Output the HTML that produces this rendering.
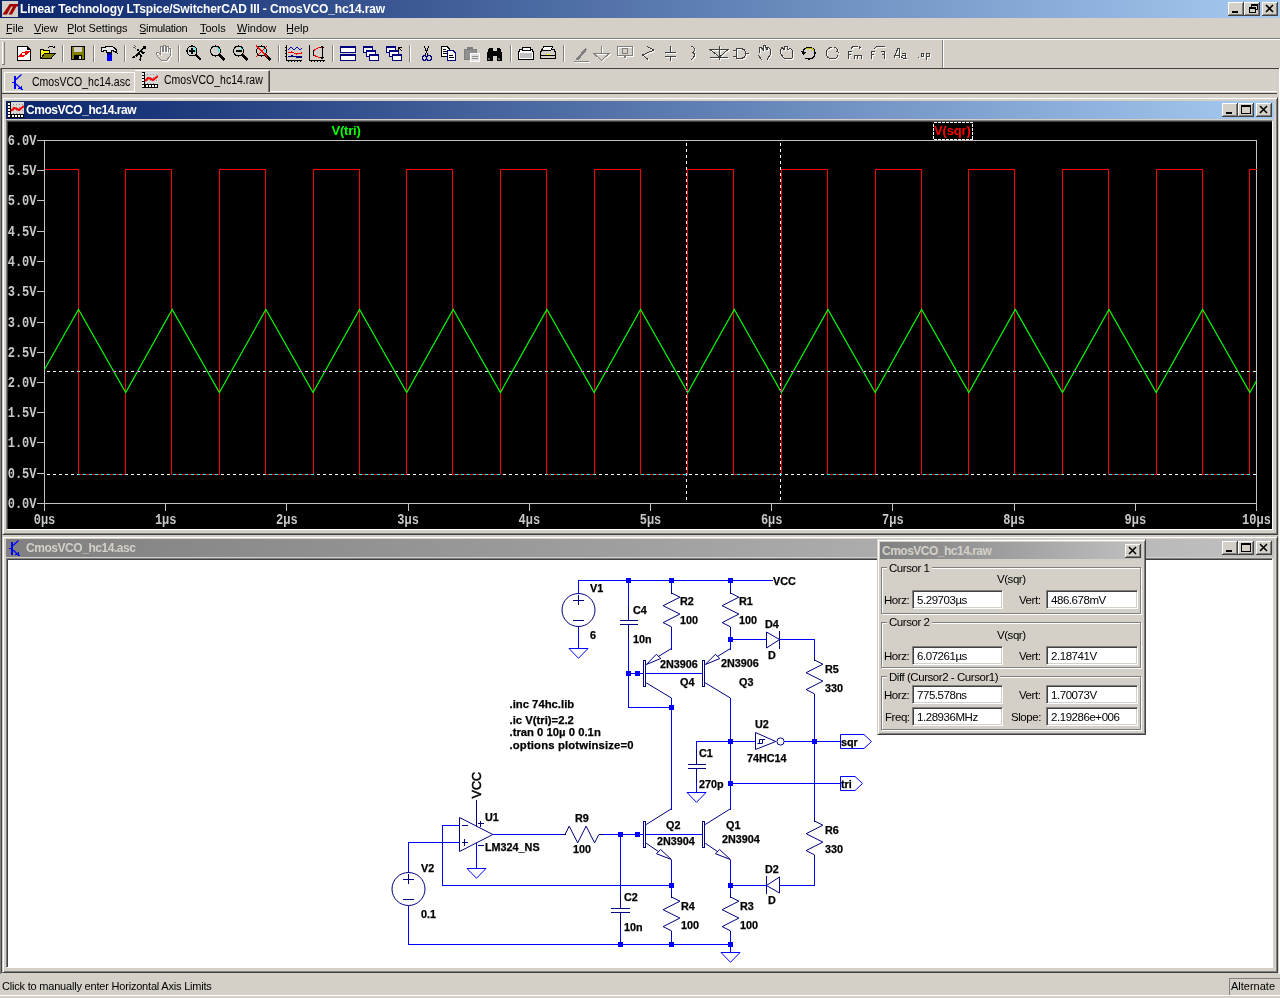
<!DOCTYPE html>
<html><head><meta charset="utf-8">
<style>
html,body{margin:0;padding:0;}
body{width:1280px;height:998px;overflow:hidden;position:relative;background:#D4D0C8;font-family:"Liberation Sans",sans-serif;font-size:11px;color:#000;}
.a{position:absolute;}
.tb{background:linear-gradient(to right,#0A246A,#A6CAF0);}
.tbi{background:linear-gradient(to right,#808080,#C0C0C0);}
.ttl{color:#fff;font-weight:bold;font-size:12px;white-space:nowrap;}
.btn{position:absolute;width:16px;height:14px;background:#D4D0C8;box-shadow:inset -1px -1px #404040,inset 1px 1px #fff,inset -2px -2px #808080;}
.menu span{position:absolute;top:4px;white-space:nowrap;}
.menu u{text-decoration:none;}
.hl{position:absolute;height:1px;}
.vl{position:absolute;width:1px;}
.sunk{box-sizing:border-box;border-top:1px solid #808080;border-left:1px solid #808080;border-bottom:1px solid #fff;border-right:1px solid #fff;}
.edit{position:absolute;height:19px;background:#fff;box-sizing:border-box;border-top:1px solid #808080;border-left:1px solid #808080;border-bottom:1px solid #fff;border-right:1px solid #fff;box-shadow:inset 1px 1px #404040,inset -1px -1px #D4D0C8;padding:3px 0 0 4px;font-size:11.5px;letter-spacing:-0.45px;white-space:nowrap;}
.grp{position:absolute;box-sizing:border-box;border:1px solid #808080;box-shadow:1px 1px #fff,inset 1px 1px #fff;}
.lbl{position:absolute;white-space:nowrap;font-size:11.5px;letter-spacing:-0.45px;}
.sch{font-family:"Liberation Sans",sans-serif;font-weight:bold;font-size:11.5px;}
.sch text{stroke:#000;stroke-width:0.25px;}
</style></head>
<body>
<!-- main title bar -->
<div class="a tb" style="left:0;top:0;width:1280px;height:18px;"></div>
<svg class="a" style="left:2px;top:1px" width="16" height="16" viewBox="0 0 16 16"><rect width="16" height="16" fill="#D4D0C8"/><path d="M0.5 13.5 H5 L10 4 H7 Z" fill="#A00000"/><path d="M7 3 H16 V5.5 H14.5 L10 13.5 H6.5 L11 5.5 H8 Z" fill="#A00000"/></svg>
<div class="a ttl" style="left:20px;top:2px;letter-spacing:-0.14px">Linear Technology LTspice/SwitcherCAD III - CmosVCO_hc14.raw</div>
<div class="btn" style="left:1228px;top:2px;"></div>
<div class="btn" style="left:1244px;top:2px;"></div>
<div class="btn" style="left:1262px;top:2px;"></div>
<svg class="a" style="left:1228px;top:2px" width="52" height="14" shape-rendering="crispEdges"><rect x="4" y="9" width="6" height="2" fill="#000"/><rect x="23.5" y="2.5" width="6" height="5" fill="none" stroke="#000"/><rect x="23" y="2" width="7" height="2" fill="#000"/><rect x="21.5" y="5.5" width="6" height="5" fill="#D4D0C8" stroke="#000"/><rect x="21" y="5" width="7" height="2" fill="#000"/><path d="M38 3 L45 10 M45 3 L38 10" stroke="#000" stroke-width="1.6" shape-rendering="auto"/></svg>

<!-- menu -->
<div class="a menu" style="left:0;top:18px;width:1280px;height:20px;">
<span style="left:6px">File</span><span style="left:34px">View</span><span style="left:67px;letter-spacing:-0.1px">Plot Settings</span><span style="left:139px;letter-spacing:-0.3px">Simulation</span><span style="left:200px">Tools</span><span style="left:237px">Window</span><span style="left:286px">Help</span>
</div>
<div class="hl" style="left:6px;top:33px;width:6px;background:#000"></div><div class="hl" style="left:34px;top:33px;width:7px;background:#000"></div><div class="hl" style="left:68px;top:33px;width:6px;background:#000"></div><div class="hl" style="left:140px;top:33px;width:6px;background:#000"></div><div class="hl" style="left:200px;top:33px;width:6px;background:#000"></div><div class="hl" style="left:237px;top:33px;width:9px;background:#000"></div><div class="hl" style="left:287px;top:33px;width:6px;background:#000"></div>
<div class="hl" style="left:0;top:38px;width:1280px;background:#808080"></div>
<div class="hl" style="left:0;top:39px;width:1280px;background:#fff"></div>

<svg class="a" style="left:0;top:0" width="960" height="70" viewBox="0 0 960 70" shape-rendering="crispEdges">
<!-- gripper -->
<rect x="2" y="42" width="1" height="23" fill="#fff"/><rect x="4" y="42" width="1" height="23" fill="#808080"/><rect x="2" y="64" width="3" height="1" fill="#808080"/>
<!-- separators -->
<g fill="#808080"><rect x="62" y="45" width="1" height="17"/><rect x="93" y="45" width="1" height="17"/><rect x="124" y="45" width="1" height="17"/><rect x="178" y="45" width="1" height="17"/><rect x="278" y="45" width="1" height="17"/><rect x="332" y="45" width="1" height="17"/><rect x="409" y="45" width="1" height="17"/><rect x="510" y="45" width="1" height="17"/><rect x="563" y="45" width="1" height="17"/><rect x="942" y="40" width="1" height="28"/></g>
<g fill="#fff"><rect x="63" y="45" width="1" height="17"/><rect x="94" y="45" width="1" height="17"/><rect x="125" y="45" width="1" height="17"/><rect x="179" y="45" width="1" height="17"/><rect x="279" y="45" width="1" height="17"/><rect x="333" y="45" width="1" height="17"/><rect x="410" y="45" width="1" height="17"/><rect x="511" y="45" width="1" height="17"/><rect x="564" y="45" width="1" height="17"/><rect x="943" y="40" width="1" height="28"/></g>
<!-- new -->
<path d="M17.5 46.5 H27 L30.5 50 V60.5 H17.5 Z" fill="#fff" stroke="#000"/><path d="M27 46.5 V49.5 H30.5" fill="none" stroke="#000"/>
<path d="M18 57 L22 52.5 L25 51.5 L30 51 L26 55 L24 56.5 L22 56.5 L21 57 Z" fill="#f00"/><ellipse cx="23.3" cy="54" rx="1.6" ry="1.3" fill="#fff"/>
<!-- open -->
<path d="M40.5 58.5 V49.5 H43 L44 50.5 H49.5 V53" fill="#ffff00" stroke="#000"/>
<path d="M41 58.5 L44.5 53.5 H55 L51 58.5 Z" fill="#808000" stroke="#000" stroke-linejoin="miter"/>
<path d="M48.5 47.5 Q51 45.5 53.5 47.5" fill="none" stroke="#000"/><path d="M52 48 H55 V46Z" fill="#000"/>
<!-- save -->
<rect x="71.5" y="46.5" width="13" height="13" fill="#808000" stroke="#000"/><rect x="74" y="47" width="8" height="5" fill="#D4D0C8"/><rect x="74" y="55" width="8" height="4" fill="#000"/><rect x="79" y="56" width="2" height="3" fill="#D4D0C8"/>
<!-- hammer -->
<path d="M101.5 48 Q103 47 104 48 Q106 46 110 46.2 Q115 46.5 116.5 50.5 L117 53 Q114 50 111.5 51 V52.5 H106.5 V51 Q104 50.5 102 51.5 Z" fill="#E8E8E8" stroke="#000" stroke-width="1.1"/>
<rect x="107" y="53" width="5" height="8" fill="#0000FF"/><rect x="107" y="53" width="5" height="2" fill="#000080"/>
<!-- runner -->
<g stroke="#000" fill="none" stroke-width="1.5"><path d="M143 48.5 L139 53 L135.5 56.5 L132 57.5"/><path d="M139 53 L141 56 L140 60.5"/><path d="M141 50 L142.5 53 L145 52.5"/><path d="M139 51 L137.5 49.5"/></g>
<circle cx="144.5" cy="47.5" r="1.6" fill="#000"/>
<path d="M133 47 L135.5 48.5 M134 45.5 L136 47" stroke="#404040" stroke-width="0.8"/>
<!-- hand grey -->
<path d="M159 58 L157 54 L159 53 L161 55 V48 L163 47 L164 53 V46 L166 46 L167 53 V47 L169 47 L169 53 V49 L171 49 V57 L168 61 H162Z" fill="none" stroke="#fff"/>
<path d="M158 57 L156 53 L158 52 L160 54 V47 L162 46 L163 52 V45 L165 45 L166 52 V46 L168 46 L168 52 V48 L170 48 V56 L167 60 H161Z" fill="none" stroke="#808080"/>
<!-- zoom icons -->
<g stroke="#000" fill="none" stroke-width="1.2">
<circle cx="192" cy="51" r="5"/><circle cx="215.5" cy="51" r="5"/><circle cx="238.5" cy="51" r="5"/><circle cx="261.5" cy="51" r="5"/>
</g>
<g stroke="#000" stroke-width="2.4"><path d="M196 55 L201 60"/><path d="M219.5 55 L224.5 60"/><path d="M242.5 55 L247.5 60"/><path d="M265.5 55 L270.5 60"/></g>
<g stroke="#0ff" stroke-width="1" fill="none"><path d="M194 47.5 Q196 49 195.5 52"/><path d="M217.5 47.5 Q219.5 49 219 52"/><path d="M240.5 47.5 Q242.5 49 242 52"/><path d="M263.5 47.5 Q265.5 49 265 52"/></g>
<path d="M189 51 H195 M192 48 V54" stroke="#000" stroke-width="1.3"/><path d="M235.5 51 H241.5" stroke="#000" stroke-width="1.3"/>
<path d="M256 45 L268 58 M267 46 L256 57" stroke="#f00" stroke-width="1.3"/>
<!-- autorange -->
<path d="M286.5 45 V60.5 H302" stroke="#000" fill="none"/><g fill="#000"><rect x="288" y="61" width="1" height="1"/><rect x="291" y="61" width="1" height="1"/><rect x="294" y="61" width="1" height="1"/><rect x="297" y="61" width="1" height="1"/><rect x="300" y="61" width="1" height="1"/><rect x="285" y="47" width="1" height="1"/><rect x="285" y="50" width="1" height="1"/><rect x="285" y="53" width="1" height="1"/><rect x="285" y="56" width="1" height="1"/></g>
<path d="M288 50 L291 47 L294 50 L297 47 L300 50 L302 48" stroke="#0000c0" fill="none"/><path d="M288 53 L292 52 L296 54 L302 53" stroke="#f00" fill="none" stroke-width="1.2"/><path d="M288 57 L292 56 L296 57 L302 57" stroke="#000080" fill="none" stroke-width="1.2"/>
<path d="M309.5 45 V60.5 H325" stroke="#000" fill="none"/><g fill="#000"><rect x="311" y="61" width="1" height="1"/><rect x="314" y="61" width="1" height="1"/><rect x="317" y="61" width="1" height="1"/><rect x="320" y="61" width="1" height="1"/><rect x="323" y="61" width="1" height="1"/></g>
<path d="M322 47 Q314 48 313 53 Q314 57 322 58" stroke="#f00" fill="none"/><path d="M322 46 V59 M320.5 48 L322 46 L323.5 48 M320.5 57 L322 59 L323.5 57 M313 50 V56" stroke="#000" fill="none"/>
<!-- tile -->
<rect x="340.5" y="46.5" width="15" height="6" fill="#fff" stroke="#000080"/><rect x="340" y="46" width="16" height="2" fill="#000080"/>
<rect x="340.5" y="54.5" width="15" height="6" fill="#fff" stroke="#000080"/><rect x="340" y="54" width="16" height="2" fill="#000080"/>
<!-- cascade -->
<g fill="#fff" stroke="#000080"><rect x="363.5" y="46.5" width="9" height="6"/><rect x="366.5" y="50.5" width="9" height="6"/><rect x="369.5" y="54.5" width="9" height="6"/></g>
<g fill="#000080"><rect x="363" y="46" width="10" height="2"/><rect x="366" y="50" width="10" height="2"/><rect x="369" y="54" width="10" height="2"/></g>
<!-- arrange -->
<g fill="#fff" stroke="#000080"><rect x="386.5" y="46.5" width="9" height="6"/><rect x="389.5" y="50.5" width="9" height="6"/><rect x="392.5" y="54.5" width="9" height="6"/></g>
<g fill="#000080"><rect x="386" y="46" width="10" height="2"/><rect x="389" y="50" width="10" height="2"/><rect x="392" y="54" width="10" height="2"/></g>
<path d="M402.5 51.5 L398.5 47.5 M398.5 47.5 V50.5 M398.5 47.5 H401.5" stroke="#000" fill="none"/>
<!-- cut -->
<path d="M424 46 L428 55 M429 46 L425 55" stroke="#000" fill="none"/><circle cx="424.5" cy="58" r="2.3" fill="none" stroke="#000080" stroke-width="1.2"/><circle cx="429" cy="58" r="2.3" fill="none" stroke="#000080" stroke-width="1.2"/>
<!-- copy -->
<path d="M441.5 46.5 H447 L449 48.5 V56.5 H441.5Z" fill="#fff" stroke="#000"/><path d="M447.5 50.5 H453 L455.5 53 V60.5 H447.5Z" fill="#fff" stroke="#000080"/><path d="M443 49 H446 M443 51 H447 M443 53 H447 M449 55 H453 M449 57 H454" stroke="#000"/>
<!-- paste grey -->
<path d="M464.5 49.5 H476.5 V59.5 H464.5 Z" fill="#909090" stroke="#808080"/><rect x="467" y="47" width="6" height="3" fill="#808080"/>
<path d="M470.5 53.5 H479.5 V61.5 H470.5 Z" fill="#E0E0E0" stroke="#fff"/><path d="M472 56.5 H478 M472 58.5 H478" stroke="#909090"/>
<!-- find -->
<path d="M487 60.5 V53 L489 48 H492.5 V51 H496.5 V48 H500 L502 53 V60.5 H496.5 V56 H492.5 V60.5 Z" fill="#000"/>
<rect x="488" y="58" width="2" height="2" fill="#606060"/><rect x="498" y="58" width="2" height="2" fill="#606060"/>
<!-- print preview -->
<path d="M518.5 52.5 V59.5 H533.5 V52.5 L532 49.5 H520Z" fill="#fff" stroke="#000"/><rect x="522" y="47" width="8" height="3" fill="#fff" stroke="#000"/><rect x="520" y="53" width="12" height="5" fill="#c0c0c0"/>
<!-- print -->
<path d="M540.5 52.5 V58.5 H555.5 V52.5 L554 49.5 H542Z" fill="#D4D0C8" stroke="#000"/><path d="M543.5 46.5 H552.5 L551 50 H542Z" fill="#fff" stroke="#000"/><rect x="541" y="55" width="14" height="1" fill="#000"/><rect x="547" y="54" width="3" height="1" fill="#ff0"/>
<!-- grey schematic tools -->
<g stroke="#fff" fill="none" transform="translate(1 1)">
<path d="M574 61.5 H589 M576 60 L586 48"/>
<path d="M601 46 V53 M594 53.5 H609 L601.5 60.5 Z"/>
<path d="M617.5 46.5 H632.5 V55.5 H626 L625 58 L624 55.5 H617.5Z"/>
<path d="M647 46.5 L654 50 L642.5 55 L648 59.5"/>
<path d="M670.5 46 V51.5 M665 52.5 H676 M665 56 H676 M670.5 57 V61"/>
<path d="M691 46 Q697 48 693 52.5 Q697 55 691 60"/>
<path d="M719.5 46 V60 M710 49.5 H728 L719.5 57 Z M710 57.5 H728"/>
<path d="M736.5 48.5 H740 Q745.5 48.5 745.5 53.5 Q745.5 58.5 740 58.5 H736.5 Z M733 50.5 H736 M733 56.5 H736 M745.5 53.5 H749"/>
<path d="M758 55 L762 60 M760 53 L759 48 L761 47 L764 51 L763 46 L765 45 L767 50 L768 47 L770 49 L770 55 L767 60"/>
<path d="M780 51 L782 47 L784 50 L785 46 L787 46 L788 50 L790 48 L793 51 L792 58 H784 L780 53Z"/>
<path d="M832 47.5 Q826 48 826 53 Q827 59 832 59 Q837 59 838 55 M834 47 Q838 48 838 52 L836 51"/>
<path d="M848 51.5 H852 M848 52 V59 M848 54 H851 M854 55 V59 M854 55.5 H861 V59 M857.5 56 V59 M851 49 L853 46 H858 M859 47 L861 48 M860 46 L859 49"/>
<path d="M871 51.5 H875 M871 52 V59 M871 54 H874 M881 51.5 H885 M884.5 52 V59 M882 54 H885 M874 49 L877 46 H885"/>
<path d="M894 58 L898 48 H899.5 V58 M895 55 H899 M902 54 Q903 53 905 53 V58 H903 Q901 58 902 56 Q903 55 906 55 M906 58 H907"/>
<path d="M917.5 57.5 H918.5 M921 53 H923 V56 H921 Z M926 53 H929 V56 H926 M926 53 V60"/>
</g>
<g stroke="#808080" fill="none">
<path d="M574 61.5 H589 M576 60 L586 48" stroke-width="1.3"/><path d="M577 60 L586 49" stroke-width="2.5"/>
<path d="M601 46 V53 M594 53.5 H609 L601.5 60.5 Z"/>
<path d="M617.5 46.5 H632.5 V55.5 H626 L625 58 L624 55.5 H617.5Z M622.5 48.5 H627.5 V53.5 H622.5Z"/>
<path d="M647 46.5 L654 50 L642.5 55 L648 59.5" stroke="#404040"/>
<path d="M670.5 46 V51.5 M665 52.5 H676 M665 56 H676 M670.5 57 V61" stroke="#404040"/>
<path d="M691 46 Q697 48 693 52.5 Q697 55 691 60" stroke="#404040"/>
<path d="M719.5 46 V60 M710 49.5 H728 L719.5 57 Z M710 57.5 H728" stroke="#404040"/>
<path d="M736.5 48.5 H740 Q745.5 48.5 745.5 53.5 Q745.5 58.5 740 58.5 H736.5 Z M733 50.5 H736 M733 56.5 H736 M745.5 53.5 H749" stroke="#404040" stroke-width="1.2"/>
<path d="M758 55 L762 60 M760 53 L759 48 L761 47 L764 51 L763 46 L765 45 L767 50 L768 47 L770 49 L770 55 L767 60" stroke="#404040"/>
<path d="M780 51 L782 47 L784 50 L785 46 L787 46 L788 50 L790 48 L793 51 L792 58 H784 L780 53Z" stroke="#404040"/>
<path d="M832 47.5 Q826 48 826 53 Q827 59 832 59 Q837 59 838 55 M834 47 Q838 48 838 52 L836 51" stroke="#404040"/>
<path d="M848 51.5 H852 M848 52 V59 M848 54 H851 M854 55 V59 M854 55.5 H861 V59 M857.5 56 V59 M851 49 L853 46 H858 M859 47 L861 48 M860 46 L859 49" stroke="#404040"/>
<path d="M871 51.5 H875 M871 52 V59 M871 54 H874 M881 51.5 H885 M884.5 52 V59 M882 54 H885 M874 49 L877 46 H885" stroke="#404040"/>
<path d="M894 58 L898 48 H899.5 V58 M895 55 H899 M902 54 Q903 53 905 53 V58 H903 Q901 58 902 56 Q903 55 906 55 M906 58 H907" stroke="#404040"/>
<path d="M917.5 57.5 H918.5 M921 53 H923 V56 H921 Z M926 53 H929 V56 H926 M926 53 V60" stroke="#404040"/>
</g>
<path d="M803 53 Q803 47.5 809 47.5 Q815 47.5 815 53 Q815 59 809 59 Q806 59 805 58" stroke="#000" fill="none" stroke-width="1.3"/><path d="M806 48.5 Q812 47 814 51" stroke="#C0C000" fill="none" stroke-width="1.2"/><path d="M801 51 L803 55 L806 52.5 Z" fill="#000"/>
</svg>


<!-- toolbar bottom -->
<div class="hl" style="left:0;top:68px;width:1279px;background:#404040"></div>
<div class="vl" style="left:1279px;top:68px;height:906px;background:#fff"></div>

<!-- tabs -->
<div class="a" style="left:4px;top:72px;width:131px;height:20px;box-sizing:border-box;border:1px solid #fff;"></div>
<div class="a" style="left:135px;top:70px;width:135px;height:22px;box-sizing:border-box;border-top:1px solid #fff;border-right:1px solid #404040;box-shadow:inset -1px 0 #808080;"></div>
<div class="hl" style="left:270px;top:91px;width:1007px;background:#fff"></div>
<svg class="a" style="left:11px;top:74px" width="16" height="16" shape-rendering="crispEdges"><path d="M1 8.5 H3" stroke="#00f"/><rect x="3" y="2" width="2" height="13" fill="#00f"/><path d="M5 5.5 L10.5 0.5 M5 10 L11.5 16" stroke="#00f" stroke-width="1.2" shape-rendering="auto"/><path d="M7.5 14.5 L12 16.5 L10.5 12Z" fill="#00f"/></svg>
<svg class="a" style="left:142px;top:72px" width="16" height="16" shape-rendering="crispEdges"><rect x="3" y="0" width="13" height="12" fill="#D8D8D8"/><g fill="#909090"><rect x="5" y="2" width="1" height="1"/><rect x="8" y="2" width="1" height="1"/><rect x="11" y="2" width="1" height="1"/><rect x="14" y="2" width="1" height="1"/><rect x="5" y="5" width="1" height="1"/><rect x="8" y="5" width="1" height="1"/><rect x="11" y="5" width="1" height="1"/><rect x="14" y="5" width="1" height="1"/><rect x="5" y="8" width="1" height="1"/><rect x="8" y="8" width="1" height="1"/><rect x="11" y="8" width="1" height="1"/><rect x="14" y="8" width="1" height="1"/><rect x="5" y="11" width="1" height="1"/><rect x="8" y="11" width="1" height="1"/><rect x="11" y="11" width="1" height="1"/></g><rect x="0" y="0" width="3" height="16" fill="#000"/><rect x="0" y="12" width="16" height="4" fill="#000"/><g fill="#fff"><rect x="0" y="1" width="2" height="2"/><rect x="0" y="4" width="2" height="2"/><rect x="0" y="7" width="2" height="2"/><rect x="0" y="10" width="2" height="2"/><rect x="0" y="13" width="2" height="2"/><rect x="4" y="13" width="2" height="2"/><rect x="7" y="13" width="2" height="2"/><rect x="10" y="13" width="2" height="2"/><rect x="13" y="13" width="2" height="2"/></g><path d="M3 9 L6 6 L9 7 L11 8 L16 4" stroke="#f00" stroke-width="2" fill="none" shape-rendering="auto"/></svg>
<div class="a" style="left:32px;top:75px;font-size:12px;white-space:nowrap;transform:scaleX(0.876);transform-origin:0 0">CmosVCO_hc14.asc</div>
<div class="a" style="left:164px;top:73px;font-size:12px;white-space:nowrap;transform:scaleX(0.876);transform-origin:0 0">CmosVCO_hc14.raw</div>

<!-- MDI client edge -->
<div class="hl" style="left:2px;top:93px;width:1275px;background:#404040"></div>
<div class="vl" style="left:0;top:68px;height:906px;background:#808080"></div>
<div class="vl" style="left:1px;top:69px;height:904px;background:#404040"></div>

<!-- ============ PLOT WINDOW ============ -->
<div class="a" style="left:2px;top:97px;width:1276px;height:438px;box-sizing:border-box;background:#D4D0C8;border-top:1px solid #D4D0C8;border-left:1px solid #D4D0C8;border-right:1px solid #404040;border-bottom:1px solid #404040;box-shadow:inset 1px 1px #fff,inset -1px -1px #808080;"></div>
<div class="a tb" style="left:6px;top:101px;width:1268px;height:18px;"></div>
<svg class="a" style="left:8px;top:102px" width="16" height="16" shape-rendering="crispEdges"><rect x="3" y="0" width="13" height="12" fill="#D8D8D8"/><g fill="#909090"><rect x="5" y="2" width="1" height="1"/><rect x="8" y="2" width="1" height="1"/><rect x="11" y="2" width="1" height="1"/><rect x="14" y="2" width="1" height="1"/><rect x="5" y="5" width="1" height="1"/><rect x="8" y="5" width="1" height="1"/><rect x="11" y="5" width="1" height="1"/><rect x="14" y="5" width="1" height="1"/><rect x="5" y="8" width="1" height="1"/><rect x="8" y="8" width="1" height="1"/><rect x="11" y="8" width="1" height="1"/><rect x="14" y="8" width="1" height="1"/><rect x="5" y="11" width="1" height="1"/><rect x="8" y="11" width="1" height="1"/><rect x="11" y="11" width="1" height="1"/></g><rect x="0" y="0" width="3" height="16" fill="#000"/><rect x="0" y="12" width="16" height="4" fill="#000"/><g fill="#fff"><rect x="0" y="1" width="2" height="2"/><rect x="0" y="4" width="2" height="2"/><rect x="0" y="7" width="2" height="2"/><rect x="0" y="10" width="2" height="2"/><rect x="0" y="13" width="2" height="2"/><rect x="4" y="13" width="2" height="2"/><rect x="7" y="13" width="2" height="2"/><rect x="10" y="13" width="2" height="2"/><rect x="13" y="13" width="2" height="2"/></g><path d="M3 9 L6 6 L9 7 L11 8 L16 4" stroke="#f00" stroke-width="2" fill="none" shape-rendering="auto"/></svg>
<div class="a ttl" style="left:26px;top:103px;letter-spacing:-0.45px">CmosVCO_hc14.raw</div>
<div class="btn" style="left:1222px;top:103px;"></div>
<div class="btn" style="left:1238px;top:103px;"></div>
<div class="btn" style="left:1256px;top:103px;"></div>
<svg class="a" style="left:1222px;top:103px" width="50" height="14" shape-rendering="crispEdges"><rect x="4" y="9" width="6" height="2" fill="#000"/><rect x="19.5" y="2.5" width="9" height="8" fill="none" stroke="#000"/><rect x="19" y="2" width="10" height="2" fill="#000"/><path d="M38 3 L45 10 M45 3 L38 10" stroke="#000" stroke-width="1.6" shape-rendering="auto"/></svg>
<div class="a" style="left:6px;top:120px;width:1267px;height:410px;box-sizing:border-box;border-top:1px solid #808080;border-left:1px solid #808080;border-right:1px solid #fff;border-bottom:1px solid #fff;box-shadow:inset 1px 1px #404040;background:#000;"></div>
<svg class="a" style="left:0;top:0" width="1280" height="540" viewBox="0 0 1280 540" shape-rendering="crispEdges">
<g fill="#C4C4C4">
<rect x="37" y="140" width="1220" height="1"/>
<rect x="37" y="503" width="1220" height="1"/>
<rect x="44" y="140" width="1" height="371"/>
<rect x="1256" y="140" width="1" height="371"/>
<rect x="37" y="140" width="7" height="1"/>
<rect x="37" y="170" width="7" height="1"/>
<rect x="37" y="200" width="7" height="1"/>
<rect x="37" y="231" width="7" height="1"/>
<rect x="37" y="261" width="7" height="1"/>
<rect x="37" y="291" width="7" height="1"/>
<rect x="37" y="322" width="7" height="1"/>
<rect x="37" y="352" width="7" height="1"/>
<rect x="37" y="382" width="7" height="1"/>
<rect x="37" y="412" width="7" height="1"/>
<rect x="37" y="442" width="7" height="1"/>
<rect x="37" y="473" width="7" height="1"/>
<rect x="37" y="503" width="7" height="1"/>
<rect x="44" y="503" width="1" height="8"/>
<rect x="165" y="503" width="1" height="8"/>
<rect x="286" y="503" width="1" height="8"/>
<rect x="408" y="503" width="1" height="8"/>
<rect x="529" y="503" width="1" height="8"/>
<rect x="650" y="503" width="1" height="8"/>
<rect x="771" y="503" width="1" height="8"/>
<rect x="892" y="503" width="1" height="8"/>
<rect x="1014" y="503" width="1" height="8"/>
<rect x="1135" y="503" width="1" height="8"/>
<rect x="1256" y="503" width="1" height="8"/>
</g>
<g fill="#C8C8C8" font-family="Liberation Mono" font-size="12" font-weight="bold" shape-rendering="auto">
<text transform="translate(36.5 507.9) scale(1 1.19)" text-anchor="end">0.0V</text>
<text transform="translate(36.5 477.9) scale(1 1.19)" text-anchor="end">0.5V</text>
<text transform="translate(36.5 446.9) scale(1 1.19)" text-anchor="end">1.0V</text>
<text transform="translate(36.5 416.9) scale(1 1.19)" text-anchor="end">1.5V</text>
<text transform="translate(36.5 386.9) scale(1 1.19)" text-anchor="end">2.0V</text>
<text transform="translate(36.5 356.9) scale(1 1.19)" text-anchor="end">2.5V</text>
<text transform="translate(36.5 326.9) scale(1 1.19)" text-anchor="end">3.0V</text>
<text transform="translate(36.5 295.9) scale(1 1.19)" text-anchor="end">3.5V</text>
<text transform="translate(36.5 265.9) scale(1 1.19)" text-anchor="end">4.0V</text>
<text transform="translate(36.5 235.9) scale(1 1.19)" text-anchor="end">4.5V</text>
<text transform="translate(36.5 204.9) scale(1 1.19)" text-anchor="end">5.0V</text>
<text transform="translate(36.5 174.9) scale(1 1.19)" text-anchor="end">5.5V</text>
<text transform="translate(36.5 144.9) scale(1 1.19)" text-anchor="end">6.0V</text>
<text transform="translate(44.5 523.5) scale(1 1.19)" text-anchor="middle">0µs</text>
<text transform="translate(165.7 523.5) scale(1 1.19)" text-anchor="middle">1µs</text>
<text transform="translate(286.9 523.5) scale(1 1.19)" text-anchor="middle">2µs</text>
<text transform="translate(408.1 523.5) scale(1 1.19)" text-anchor="middle">3µs</text>
<text transform="translate(529.3 523.5) scale(1 1.19)" text-anchor="middle">4µs</text>
<text transform="translate(650.5 523.5) scale(1 1.19)" text-anchor="middle">5µs</text>
<text transform="translate(771.7 523.5) scale(1 1.19)" text-anchor="middle">6µs</text>
<text transform="translate(892.9 523.5) scale(1 1.19)" text-anchor="middle">7µs</text>
<text transform="translate(1014.1 523.5) scale(1 1.19)" text-anchor="middle">8µs</text>
<text transform="translate(1135.3 523.5) scale(1 1.19)" text-anchor="middle">9µs</text>
<text transform="translate(1256.5 523.5) scale(1 1.19)" text-anchor="middle">10µs</text>
</g>
<path d="M44.5 169.5 L78.5 169.5 L78.5 474.5 L125.5 474.5 L125.5 169.5 L171.5 169.5 L171.5 474.5 L219.5 474.5 L219.5 169.5 L265.5 169.5 L265.5 474.5 L313.5 474.5 L313.5 169.5 L359.5 169.5 L359.5 474.5 L406.5 474.5 L406.5 169.5 L452.5 169.5 L452.5 474.5 L500.5 474.5 L500.5 169.5 L546.5 169.5 L546.5 474.5 L594.5 474.5 L594.5 169.5 L640.5 169.5 L640.5 474.5 L687.5 474.5 L687.5 169.5 L733.5 169.5 L733.5 474.5 L781.5 474.5 L781.5 169.5 L827.5 169.5 L827.5 474.5 L875.5 474.5 L875.5 169.5 L921.5 169.5 L921.5 474.5 L968.5 474.5 L968.5 169.5 L1014.5 169.5 L1014.5 474.5 L1062.5 474.5 L1062.5 169.5 L1108.5 169.5 L1108.5 474.5 L1156.5 474.5 L1156.5 169.5 L1202.5 169.5 L1202.5 474.5 L1249.5 474.5 L1249.5 169.5 L1256.5 169.5" stroke="#FF0000" stroke-width="1" fill="none"/>
<path d="M44.50 369.50 L78.50 309.50 L125.70 392.50 L172.18 309.50 L219.38 392.50 L265.86 309.50 L313.06 392.50 L359.54 309.50 L406.74 392.50 L453.22 309.50 L500.42 392.50 L546.90 309.50 L594.10 392.50 L640.58 309.50 L687.78 392.50 L734.26 309.50 L781.46 392.50 L827.94 309.50 L875.14 392.50 L921.62 309.50 L968.82 392.50 L1015.30 309.50 L1062.50 392.50 L1108.98 309.50 L1156.18 392.50 L1202.66 309.50 L1249.86 392.50 L1256.50 380.73" stroke="#00FF00" stroke-width="1.15" fill="none" shape-rendering="auto"/>
<text x="331.5" y="134.5" fill="#00FF00" font-family="Liberation Sans" font-weight="bold" font-size="13" letter-spacing="-0.2" shape-rendering="auto">V(tri)</text>
<text x="934" y="134.5" fill="#FF0000" font-family="Liberation Sans" font-weight="bold" font-size="13" letter-spacing="-0.15" shape-rendering="auto">V(sqr)</text>
<rect x="933.5" y="122.5" width="39" height="17" fill="none" stroke="#fff" stroke-dasharray="3 1"/>
</svg>
<svg class="a" style="left:0;top:0;mix-blend-mode:difference" width="1280" height="540" viewBox="0 0 1280 540" shape-rendering="crispEdges">
<g fill="#FFFFFF">
<rect x="686" y="143" width="1" height="3"/>
<rect x="686" y="149" width="1" height="3"/>
<rect x="686" y="155" width="1" height="3"/>
<rect x="686" y="161" width="1" height="3"/>
<rect x="686" y="167" width="1" height="3"/>
<rect x="686" y="173" width="1" height="3"/>
<rect x="686" y="179" width="1" height="3"/>
<rect x="686" y="185" width="1" height="3"/>
<rect x="686" y="191" width="1" height="3"/>
<rect x="686" y="197" width="1" height="3"/>
<rect x="686" y="203" width="1" height="3"/>
<rect x="686" y="209" width="1" height="3"/>
<rect x="686" y="215" width="1" height="3"/>
<rect x="686" y="221" width="1" height="3"/>
<rect x="686" y="227" width="1" height="3"/>
<rect x="686" y="233" width="1" height="3"/>
<rect x="686" y="239" width="1" height="3"/>
<rect x="686" y="245" width="1" height="3"/>
<rect x="686" y="251" width="1" height="3"/>
<rect x="686" y="257" width="1" height="3"/>
<rect x="686" y="263" width="1" height="3"/>
<rect x="686" y="269" width="1" height="3"/>
<rect x="686" y="275" width="1" height="3"/>
<rect x="686" y="281" width="1" height="3"/>
<rect x="686" y="287" width="1" height="3"/>
<rect x="686" y="293" width="1" height="3"/>
<rect x="686" y="299" width="1" height="3"/>
<rect x="686" y="305" width="1" height="3"/>
<rect x="686" y="311" width="1" height="3"/>
<rect x="686" y="317" width="1" height="3"/>
<rect x="686" y="323" width="1" height="3"/>
<rect x="686" y="329" width="1" height="3"/>
<rect x="686" y="335" width="1" height="3"/>
<rect x="686" y="341" width="1" height="3"/>
<rect x="686" y="347" width="1" height="3"/>
<rect x="686" y="353" width="1" height="3"/>
<rect x="686" y="359" width="1" height="3"/>
<rect x="686" y="365" width="1" height="3"/>
<rect x="686" y="371" width="1" height="3"/>
<rect x="686" y="377" width="1" height="3"/>
<rect x="686" y="383" width="1" height="3"/>
<rect x="686" y="389" width="1" height="3"/>
<rect x="686" y="395" width="1" height="3"/>
<rect x="686" y="401" width="1" height="3"/>
<rect x="686" y="407" width="1" height="3"/>
<rect x="686" y="413" width="1" height="3"/>
<rect x="686" y="419" width="1" height="3"/>
<rect x="686" y="425" width="1" height="3"/>
<rect x="686" y="431" width="1" height="3"/>
<rect x="686" y="437" width="1" height="3"/>
<rect x="686" y="443" width="1" height="3"/>
<rect x="686" y="449" width="1" height="3"/>
<rect x="686" y="455" width="1" height="3"/>
<rect x="686" y="461" width="1" height="3"/>
<rect x="686" y="467" width="1" height="3"/>
<rect x="686" y="473" width="1" height="3"/>
<rect x="686" y="479" width="1" height="3"/>
<rect x="686" y="485" width="1" height="3"/>
<rect x="686" y="491" width="1" height="3"/>
<rect x="686" y="497" width="1" height="3"/>
<rect x="780" y="143" width="1" height="3"/>
<rect x="780" y="149" width="1" height="3"/>
<rect x="780" y="155" width="1" height="3"/>
<rect x="780" y="161" width="1" height="3"/>
<rect x="780" y="167" width="1" height="3"/>
<rect x="780" y="173" width="1" height="3"/>
<rect x="780" y="179" width="1" height="3"/>
<rect x="780" y="185" width="1" height="3"/>
<rect x="780" y="191" width="1" height="3"/>
<rect x="780" y="197" width="1" height="3"/>
<rect x="780" y="203" width="1" height="3"/>
<rect x="780" y="209" width="1" height="3"/>
<rect x="780" y="215" width="1" height="3"/>
<rect x="780" y="221" width="1" height="3"/>
<rect x="780" y="227" width="1" height="3"/>
<rect x="780" y="233" width="1" height="3"/>
<rect x="780" y="239" width="1" height="3"/>
<rect x="780" y="245" width="1" height="3"/>
<rect x="780" y="251" width="1" height="3"/>
<rect x="780" y="257" width="1" height="3"/>
<rect x="780" y="263" width="1" height="3"/>
<rect x="780" y="269" width="1" height="3"/>
<rect x="780" y="275" width="1" height="3"/>
<rect x="780" y="281" width="1" height="3"/>
<rect x="780" y="287" width="1" height="3"/>
<rect x="780" y="293" width="1" height="3"/>
<rect x="780" y="299" width="1" height="3"/>
<rect x="780" y="305" width="1" height="3"/>
<rect x="780" y="311" width="1" height="3"/>
<rect x="780" y="317" width="1" height="3"/>
<rect x="780" y="323" width="1" height="3"/>
<rect x="780" y="329" width="1" height="3"/>
<rect x="780" y="335" width="1" height="3"/>
<rect x="780" y="341" width="1" height="3"/>
<rect x="780" y="347" width="1" height="3"/>
<rect x="780" y="353" width="1" height="3"/>
<rect x="780" y="359" width="1" height="3"/>
<rect x="780" y="365" width="1" height="3"/>
<rect x="780" y="371" width="1" height="3"/>
<rect x="780" y="377" width="1" height="3"/>
<rect x="780" y="383" width="1" height="3"/>
<rect x="780" y="389" width="1" height="3"/>
<rect x="780" y="395" width="1" height="3"/>
<rect x="780" y="401" width="1" height="3"/>
<rect x="780" y="407" width="1" height="3"/>
<rect x="780" y="413" width="1" height="3"/>
<rect x="780" y="419" width="1" height="3"/>
<rect x="780" y="425" width="1" height="3"/>
<rect x="780" y="431" width="1" height="3"/>
<rect x="780" y="437" width="1" height="3"/>
<rect x="780" y="443" width="1" height="3"/>
<rect x="780" y="449" width="1" height="3"/>
<rect x="780" y="455" width="1" height="3"/>
<rect x="780" y="461" width="1" height="3"/>
<rect x="780" y="467" width="1" height="3"/>
<rect x="780" y="473" width="1" height="3"/>
<rect x="780" y="479" width="1" height="3"/>
<rect x="780" y="485" width="1" height="3"/>
<rect x="780" y="491" width="1" height="3"/>
<rect x="780" y="497" width="1" height="3"/>
<rect x="47" y="474" width="3" height="1"/>
<rect x="53" y="474" width="3" height="1"/>
<rect x="59" y="474" width="3" height="1"/>
<rect x="65" y="474" width="3" height="1"/>
<rect x="71" y="474" width="3" height="1"/>
<rect x="77" y="474" width="3" height="1"/>
<rect x="83" y="474" width="3" height="1"/>
<rect x="89" y="474" width="3" height="1"/>
<rect x="95" y="474" width="3" height="1"/>
<rect x="101" y="474" width="3" height="1"/>
<rect x="107" y="474" width="3" height="1"/>
<rect x="113" y="474" width="3" height="1"/>
<rect x="119" y="474" width="3" height="1"/>
<rect x="125" y="474" width="3" height="1"/>
<rect x="131" y="474" width="3" height="1"/>
<rect x="137" y="474" width="3" height="1"/>
<rect x="143" y="474" width="3" height="1"/>
<rect x="149" y="474" width="3" height="1"/>
<rect x="155" y="474" width="3" height="1"/>
<rect x="161" y="474" width="3" height="1"/>
<rect x="167" y="474" width="3" height="1"/>
<rect x="173" y="474" width="3" height="1"/>
<rect x="179" y="474" width="3" height="1"/>
<rect x="185" y="474" width="3" height="1"/>
<rect x="191" y="474" width="3" height="1"/>
<rect x="197" y="474" width="3" height="1"/>
<rect x="203" y="474" width="3" height="1"/>
<rect x="209" y="474" width="3" height="1"/>
<rect x="215" y="474" width="3" height="1"/>
<rect x="221" y="474" width="3" height="1"/>
<rect x="227" y="474" width="3" height="1"/>
<rect x="233" y="474" width="3" height="1"/>
<rect x="239" y="474" width="3" height="1"/>
<rect x="245" y="474" width="3" height="1"/>
<rect x="251" y="474" width="3" height="1"/>
<rect x="257" y="474" width="3" height="1"/>
<rect x="263" y="474" width="3" height="1"/>
<rect x="269" y="474" width="3" height="1"/>
<rect x="275" y="474" width="3" height="1"/>
<rect x="281" y="474" width="3" height="1"/>
<rect x="287" y="474" width="3" height="1"/>
<rect x="293" y="474" width="3" height="1"/>
<rect x="299" y="474" width="3" height="1"/>
<rect x="305" y="474" width="3" height="1"/>
<rect x="311" y="474" width="3" height="1"/>
<rect x="317" y="474" width="3" height="1"/>
<rect x="323" y="474" width="3" height="1"/>
<rect x="329" y="474" width="3" height="1"/>
<rect x="335" y="474" width="3" height="1"/>
<rect x="341" y="474" width="3" height="1"/>
<rect x="347" y="474" width="3" height="1"/>
<rect x="353" y="474" width="3" height="1"/>
<rect x="359" y="474" width="3" height="1"/>
<rect x="365" y="474" width="3" height="1"/>
<rect x="371" y="474" width="3" height="1"/>
<rect x="377" y="474" width="3" height="1"/>
<rect x="383" y="474" width="3" height="1"/>
<rect x="389" y="474" width="3" height="1"/>
<rect x="395" y="474" width="3" height="1"/>
<rect x="401" y="474" width="3" height="1"/>
<rect x="407" y="474" width="3" height="1"/>
<rect x="413" y="474" width="3" height="1"/>
<rect x="419" y="474" width="3" height="1"/>
<rect x="425" y="474" width="3" height="1"/>
<rect x="431" y="474" width="3" height="1"/>
<rect x="437" y="474" width="3" height="1"/>
<rect x="443" y="474" width="3" height="1"/>
<rect x="449" y="474" width="3" height="1"/>
<rect x="455" y="474" width="3" height="1"/>
<rect x="461" y="474" width="3" height="1"/>
<rect x="467" y="474" width="3" height="1"/>
<rect x="473" y="474" width="3" height="1"/>
<rect x="479" y="474" width="3" height="1"/>
<rect x="485" y="474" width="3" height="1"/>
<rect x="491" y="474" width="3" height="1"/>
<rect x="497" y="474" width="3" height="1"/>
<rect x="503" y="474" width="3" height="1"/>
<rect x="509" y="474" width="3" height="1"/>
<rect x="515" y="474" width="3" height="1"/>
<rect x="521" y="474" width="3" height="1"/>
<rect x="527" y="474" width="3" height="1"/>
<rect x="533" y="474" width="3" height="1"/>
<rect x="539" y="474" width="3" height="1"/>
<rect x="545" y="474" width="3" height="1"/>
<rect x="551" y="474" width="3" height="1"/>
<rect x="557" y="474" width="3" height="1"/>
<rect x="563" y="474" width="3" height="1"/>
<rect x="569" y="474" width="3" height="1"/>
<rect x="575" y="474" width="3" height="1"/>
<rect x="581" y="474" width="3" height="1"/>
<rect x="587" y="474" width="3" height="1"/>
<rect x="593" y="474" width="3" height="1"/>
<rect x="599" y="474" width="3" height="1"/>
<rect x="605" y="474" width="3" height="1"/>
<rect x="611" y="474" width="3" height="1"/>
<rect x="617" y="474" width="3" height="1"/>
<rect x="623" y="474" width="3" height="1"/>
<rect x="629" y="474" width="3" height="1"/>
<rect x="635" y="474" width="3" height="1"/>
<rect x="641" y="474" width="3" height="1"/>
<rect x="647" y="474" width="3" height="1"/>
<rect x="653" y="474" width="3" height="1"/>
<rect x="659" y="474" width="3" height="1"/>
<rect x="665" y="474" width="3" height="1"/>
<rect x="671" y="474" width="3" height="1"/>
<rect x="677" y="474" width="3" height="1"/>
<rect x="683" y="474" width="3" height="1"/>
<rect x="689" y="474" width="3" height="1"/>
<rect x="695" y="474" width="3" height="1"/>
<rect x="701" y="474" width="3" height="1"/>
<rect x="707" y="474" width="3" height="1"/>
<rect x="713" y="474" width="3" height="1"/>
<rect x="719" y="474" width="3" height="1"/>
<rect x="725" y="474" width="3" height="1"/>
<rect x="731" y="474" width="3" height="1"/>
<rect x="737" y="474" width="3" height="1"/>
<rect x="743" y="474" width="3" height="1"/>
<rect x="749" y="474" width="3" height="1"/>
<rect x="755" y="474" width="3" height="1"/>
<rect x="761" y="474" width="3" height="1"/>
<rect x="767" y="474" width="3" height="1"/>
<rect x="773" y="474" width="3" height="1"/>
<rect x="779" y="474" width="3" height="1"/>
<rect x="785" y="474" width="3" height="1"/>
<rect x="791" y="474" width="3" height="1"/>
<rect x="797" y="474" width="3" height="1"/>
<rect x="803" y="474" width="3" height="1"/>
<rect x="809" y="474" width="3" height="1"/>
<rect x="815" y="474" width="3" height="1"/>
<rect x="821" y="474" width="3" height="1"/>
<rect x="827" y="474" width="3" height="1"/>
<rect x="833" y="474" width="3" height="1"/>
<rect x="839" y="474" width="3" height="1"/>
<rect x="845" y="474" width="3" height="1"/>
<rect x="851" y="474" width="3" height="1"/>
<rect x="857" y="474" width="3" height="1"/>
<rect x="863" y="474" width="3" height="1"/>
<rect x="869" y="474" width="3" height="1"/>
<rect x="875" y="474" width="3" height="1"/>
<rect x="881" y="474" width="3" height="1"/>
<rect x="887" y="474" width="3" height="1"/>
<rect x="893" y="474" width="3" height="1"/>
<rect x="899" y="474" width="3" height="1"/>
<rect x="905" y="474" width="3" height="1"/>
<rect x="911" y="474" width="3" height="1"/>
<rect x="917" y="474" width="3" height="1"/>
<rect x="923" y="474" width="3" height="1"/>
<rect x="929" y="474" width="3" height="1"/>
<rect x="935" y="474" width="3" height="1"/>
<rect x="941" y="474" width="3" height="1"/>
<rect x="947" y="474" width="3" height="1"/>
<rect x="953" y="474" width="3" height="1"/>
<rect x="959" y="474" width="3" height="1"/>
<rect x="965" y="474" width="3" height="1"/>
<rect x="971" y="474" width="3" height="1"/>
<rect x="977" y="474" width="3" height="1"/>
<rect x="983" y="474" width="3" height="1"/>
<rect x="989" y="474" width="3" height="1"/>
<rect x="995" y="474" width="3" height="1"/>
<rect x="1001" y="474" width="3" height="1"/>
<rect x="1007" y="474" width="3" height="1"/>
<rect x="1013" y="474" width="3" height="1"/>
<rect x="1019" y="474" width="3" height="1"/>
<rect x="1025" y="474" width="3" height="1"/>
<rect x="1031" y="474" width="3" height="1"/>
<rect x="1037" y="474" width="3" height="1"/>
<rect x="1043" y="474" width="3" height="1"/>
<rect x="1049" y="474" width="3" height="1"/>
<rect x="1055" y="474" width="3" height="1"/>
<rect x="1061" y="474" width="3" height="1"/>
<rect x="1067" y="474" width="3" height="1"/>
<rect x="1073" y="474" width="3" height="1"/>
<rect x="1079" y="474" width="3" height="1"/>
<rect x="1085" y="474" width="3" height="1"/>
<rect x="1091" y="474" width="3" height="1"/>
<rect x="1097" y="474" width="3" height="1"/>
<rect x="1103" y="474" width="3" height="1"/>
<rect x="1109" y="474" width="3" height="1"/>
<rect x="1115" y="474" width="3" height="1"/>
<rect x="1121" y="474" width="3" height="1"/>
<rect x="1127" y="474" width="3" height="1"/>
<rect x="1133" y="474" width="3" height="1"/>
<rect x="1139" y="474" width="3" height="1"/>
<rect x="1145" y="474" width="3" height="1"/>
<rect x="1151" y="474" width="3" height="1"/>
<rect x="1157" y="474" width="3" height="1"/>
<rect x="1163" y="474" width="3" height="1"/>
<rect x="1169" y="474" width="3" height="1"/>
<rect x="1175" y="474" width="3" height="1"/>
<rect x="1181" y="474" width="3" height="1"/>
<rect x="1187" y="474" width="3" height="1"/>
<rect x="1193" y="474" width="3" height="1"/>
<rect x="1199" y="474" width="3" height="1"/>
<rect x="1205" y="474" width="3" height="1"/>
<rect x="1211" y="474" width="3" height="1"/>
<rect x="1217" y="474" width="3" height="1"/>
<rect x="1223" y="474" width="3" height="1"/>
<rect x="1229" y="474" width="3" height="1"/>
<rect x="1235" y="474" width="3" height="1"/>
<rect x="1241" y="474" width="3" height="1"/>
<rect x="1247" y="474" width="3" height="1"/>
<rect x="1253" y="474" width="3" height="1"/>
<rect x="47" y="371" width="3" height="1"/>
<rect x="53" y="371" width="3" height="1"/>
<rect x="59" y="371" width="3" height="1"/>
<rect x="65" y="371" width="3" height="1"/>
<rect x="71" y="371" width="3" height="1"/>
<rect x="77" y="371" width="3" height="1"/>
<rect x="83" y="371" width="3" height="1"/>
<rect x="89" y="371" width="3" height="1"/>
<rect x="95" y="371" width="3" height="1"/>
<rect x="101" y="371" width="3" height="1"/>
<rect x="107" y="371" width="3" height="1"/>
<rect x="113" y="371" width="3" height="1"/>
<rect x="119" y="371" width="3" height="1"/>
<rect x="125" y="371" width="3" height="1"/>
<rect x="131" y="371" width="3" height="1"/>
<rect x="137" y="371" width="3" height="1"/>
<rect x="143" y="371" width="3" height="1"/>
<rect x="149" y="371" width="3" height="1"/>
<rect x="155" y="371" width="3" height="1"/>
<rect x="161" y="371" width="3" height="1"/>
<rect x="167" y="371" width="3" height="1"/>
<rect x="173" y="371" width="3" height="1"/>
<rect x="179" y="371" width="3" height="1"/>
<rect x="185" y="371" width="3" height="1"/>
<rect x="191" y="371" width="3" height="1"/>
<rect x="197" y="371" width="3" height="1"/>
<rect x="203" y="371" width="3" height="1"/>
<rect x="209" y="371" width="3" height="1"/>
<rect x="215" y="371" width="3" height="1"/>
<rect x="221" y="371" width="3" height="1"/>
<rect x="227" y="371" width="3" height="1"/>
<rect x="233" y="371" width="3" height="1"/>
<rect x="239" y="371" width="3" height="1"/>
<rect x="245" y="371" width="3" height="1"/>
<rect x="251" y="371" width="3" height="1"/>
<rect x="257" y="371" width="3" height="1"/>
<rect x="263" y="371" width="3" height="1"/>
<rect x="269" y="371" width="3" height="1"/>
<rect x="275" y="371" width="3" height="1"/>
<rect x="281" y="371" width="3" height="1"/>
<rect x="287" y="371" width="3" height="1"/>
<rect x="293" y="371" width="3" height="1"/>
<rect x="299" y="371" width="3" height="1"/>
<rect x="305" y="371" width="3" height="1"/>
<rect x="311" y="371" width="3" height="1"/>
<rect x="317" y="371" width="3" height="1"/>
<rect x="323" y="371" width="3" height="1"/>
<rect x="329" y="371" width="3" height="1"/>
<rect x="335" y="371" width="3" height="1"/>
<rect x="341" y="371" width="3" height="1"/>
<rect x="347" y="371" width="3" height="1"/>
<rect x="353" y="371" width="3" height="1"/>
<rect x="359" y="371" width="3" height="1"/>
<rect x="365" y="371" width="3" height="1"/>
<rect x="371" y="371" width="3" height="1"/>
<rect x="377" y="371" width="3" height="1"/>
<rect x="383" y="371" width="3" height="1"/>
<rect x="389" y="371" width="3" height="1"/>
<rect x="395" y="371" width="3" height="1"/>
<rect x="401" y="371" width="3" height="1"/>
<rect x="407" y="371" width="3" height="1"/>
<rect x="413" y="371" width="3" height="1"/>
<rect x="419" y="371" width="3" height="1"/>
<rect x="425" y="371" width="3" height="1"/>
<rect x="431" y="371" width="3" height="1"/>
<rect x="437" y="371" width="3" height="1"/>
<rect x="443" y="371" width="3" height="1"/>
<rect x="449" y="371" width="3" height="1"/>
<rect x="455" y="371" width="3" height="1"/>
<rect x="461" y="371" width="3" height="1"/>
<rect x="467" y="371" width="3" height="1"/>
<rect x="473" y="371" width="3" height="1"/>
<rect x="479" y="371" width="3" height="1"/>
<rect x="485" y="371" width="3" height="1"/>
<rect x="491" y="371" width="3" height="1"/>
<rect x="497" y="371" width="3" height="1"/>
<rect x="503" y="371" width="3" height="1"/>
<rect x="509" y="371" width="3" height="1"/>
<rect x="515" y="371" width="3" height="1"/>
<rect x="521" y="371" width="3" height="1"/>
<rect x="527" y="371" width="3" height="1"/>
<rect x="533" y="371" width="3" height="1"/>
<rect x="539" y="371" width="3" height="1"/>
<rect x="545" y="371" width="3" height="1"/>
<rect x="551" y="371" width="3" height="1"/>
<rect x="557" y="371" width="3" height="1"/>
<rect x="563" y="371" width="3" height="1"/>
<rect x="569" y="371" width="3" height="1"/>
<rect x="575" y="371" width="3" height="1"/>
<rect x="581" y="371" width="3" height="1"/>
<rect x="587" y="371" width="3" height="1"/>
<rect x="593" y="371" width="3" height="1"/>
<rect x="599" y="371" width="3" height="1"/>
<rect x="605" y="371" width="3" height="1"/>
<rect x="611" y="371" width="3" height="1"/>
<rect x="617" y="371" width="3" height="1"/>
<rect x="623" y="371" width="3" height="1"/>
<rect x="629" y="371" width="3" height="1"/>
<rect x="635" y="371" width="3" height="1"/>
<rect x="641" y="371" width="3" height="1"/>
<rect x="647" y="371" width="3" height="1"/>
<rect x="653" y="371" width="3" height="1"/>
<rect x="659" y="371" width="3" height="1"/>
<rect x="665" y="371" width="3" height="1"/>
<rect x="671" y="371" width="3" height="1"/>
<rect x="677" y="371" width="3" height="1"/>
<rect x="683" y="371" width="3" height="1"/>
<rect x="689" y="371" width="3" height="1"/>
<rect x="695" y="371" width="3" height="1"/>
<rect x="701" y="371" width="3" height="1"/>
<rect x="707" y="371" width="3" height="1"/>
<rect x="713" y="371" width="3" height="1"/>
<rect x="719" y="371" width="3" height="1"/>
<rect x="725" y="371" width="3" height="1"/>
<rect x="731" y="371" width="3" height="1"/>
<rect x="737" y="371" width="3" height="1"/>
<rect x="743" y="371" width="3" height="1"/>
<rect x="749" y="371" width="3" height="1"/>
<rect x="755" y="371" width="3" height="1"/>
<rect x="761" y="371" width="3" height="1"/>
<rect x="767" y="371" width="3" height="1"/>
<rect x="773" y="371" width="3" height="1"/>
<rect x="779" y="371" width="3" height="1"/>
<rect x="785" y="371" width="3" height="1"/>
<rect x="791" y="371" width="3" height="1"/>
<rect x="797" y="371" width="3" height="1"/>
<rect x="803" y="371" width="3" height="1"/>
<rect x="809" y="371" width="3" height="1"/>
<rect x="815" y="371" width="3" height="1"/>
<rect x="821" y="371" width="3" height="1"/>
<rect x="827" y="371" width="3" height="1"/>
<rect x="833" y="371" width="3" height="1"/>
<rect x="839" y="371" width="3" height="1"/>
<rect x="845" y="371" width="3" height="1"/>
<rect x="851" y="371" width="3" height="1"/>
<rect x="857" y="371" width="3" height="1"/>
<rect x="863" y="371" width="3" height="1"/>
<rect x="869" y="371" width="3" height="1"/>
<rect x="875" y="371" width="3" height="1"/>
<rect x="881" y="371" width="3" height="1"/>
<rect x="887" y="371" width="3" height="1"/>
<rect x="893" y="371" width="3" height="1"/>
<rect x="899" y="371" width="3" height="1"/>
<rect x="905" y="371" width="3" height="1"/>
<rect x="911" y="371" width="3" height="1"/>
<rect x="917" y="371" width="3" height="1"/>
<rect x="923" y="371" width="3" height="1"/>
<rect x="929" y="371" width="3" height="1"/>
<rect x="935" y="371" width="3" height="1"/>
<rect x="941" y="371" width="3" height="1"/>
<rect x="947" y="371" width="3" height="1"/>
<rect x="953" y="371" width="3" height="1"/>
<rect x="959" y="371" width="3" height="1"/>
<rect x="965" y="371" width="3" height="1"/>
<rect x="971" y="371" width="3" height="1"/>
<rect x="977" y="371" width="3" height="1"/>
<rect x="983" y="371" width="3" height="1"/>
<rect x="989" y="371" width="3" height="1"/>
<rect x="995" y="371" width="3" height="1"/>
<rect x="1001" y="371" width="3" height="1"/>
<rect x="1007" y="371" width="3" height="1"/>
<rect x="1013" y="371" width="3" height="1"/>
<rect x="1019" y="371" width="3" height="1"/>
<rect x="1025" y="371" width="3" height="1"/>
<rect x="1031" y="371" width="3" height="1"/>
<rect x="1037" y="371" width="3" height="1"/>
<rect x="1043" y="371" width="3" height="1"/>
<rect x="1049" y="371" width="3" height="1"/>
<rect x="1055" y="371" width="3" height="1"/>
<rect x="1061" y="371" width="3" height="1"/>
<rect x="1067" y="371" width="3" height="1"/>
<rect x="1073" y="371" width="3" height="1"/>
<rect x="1079" y="371" width="3" height="1"/>
<rect x="1085" y="371" width="3" height="1"/>
<rect x="1091" y="371" width="3" height="1"/>
<rect x="1097" y="371" width="3" height="1"/>
<rect x="1103" y="371" width="3" height="1"/>
<rect x="1109" y="371" width="3" height="1"/>
<rect x="1115" y="371" width="3" height="1"/>
<rect x="1121" y="371" width="3" height="1"/>
<rect x="1127" y="371" width="3" height="1"/>
<rect x="1133" y="371" width="3" height="1"/>
<rect x="1139" y="371" width="3" height="1"/>
<rect x="1145" y="371" width="3" height="1"/>
<rect x="1151" y="371" width="3" height="1"/>
<rect x="1157" y="371" width="3" height="1"/>
<rect x="1163" y="371" width="3" height="1"/>
<rect x="1169" y="371" width="3" height="1"/>
<rect x="1175" y="371" width="3" height="1"/>
<rect x="1181" y="371" width="3" height="1"/>
<rect x="1187" y="371" width="3" height="1"/>
<rect x="1193" y="371" width="3" height="1"/>
<rect x="1199" y="371" width="3" height="1"/>
<rect x="1205" y="371" width="3" height="1"/>
<rect x="1211" y="371" width="3" height="1"/>
<rect x="1217" y="371" width="3" height="1"/>
<rect x="1223" y="371" width="3" height="1"/>
<rect x="1229" y="371" width="3" height="1"/>
<rect x="1235" y="371" width="3" height="1"/>
<rect x="1241" y="371" width="3" height="1"/>
<rect x="1247" y="371" width="3" height="1"/>
<rect x="1253" y="371" width="3" height="1"/>
</g></svg>

<!-- ============ SCHEMATIC WINDOW ============ -->
<div class="a" style="left:2px;top:536px;width:1276px;height:437px;box-sizing:border-box;background:#D4D0C8;border-top:1px solid #D4D0C8;border-left:1px solid #D4D0C8;border-right:1px solid #404040;border-bottom:1px solid #404040;box-shadow:inset 1px 1px #fff,inset -1px -1px #808080;"></div>
<div class="a tbi" style="left:6px;top:539px;width:1268px;height:18px;"></div>
<svg class="a" style="left:8px;top:540px" width="16" height="16" shape-rendering="crispEdges"><path d="M1 8.5 H3" stroke="#00f"/><rect x="3" y="2" width="2" height="13" fill="#00f"/><path d="M5 5.5 L10.5 0.5 M5 10 L11.5 16" stroke="#00f" stroke-width="1.2" shape-rendering="auto"/><path d="M7.5 14.5 L12 16.5 L10.5 12Z" fill="#00f"/></svg>
<div class="a ttl" style="left:26px;top:541px;color:#D4D0C8;letter-spacing:-0.45px">CmosVCO_hc14.asc</div>
<div class="btn" style="left:1222px;top:541px;"></div>
<div class="btn" style="left:1238px;top:541px;"></div>
<div class="btn" style="left:1256px;top:541px;"></div>
<svg class="a" style="left:1222px;top:541px" width="50" height="14" shape-rendering="crispEdges"><rect x="4" y="9" width="6" height="2" fill="#000"/><rect x="19.5" y="2.5" width="9" height="8" fill="none" stroke="#000"/><rect x="19" y="2" width="10" height="2" fill="#000"/><path d="M38 3 L45 10 M45 3 L38 10" stroke="#000" stroke-width="1.6" shape-rendering="auto"/></svg>
<div class="a" style="left:6px;top:558px;width:1267px;height:410px;box-sizing:border-box;border-top:1px solid #808080;border-left:1px solid #808080;border-right:1px solid #fff;border-bottom:1px solid #fff;box-shadow:inset 1px 1px #404040;background:#fff;"></div>
<svg class="a sch" style="left:0;top:0" width="1280" height="998" viewBox="0 0 1280 998" shape-rendering="crispEdges">
<rect x="578" y="580" width="195" height="1" fill="#0000FF"/>
<rect x="578" y="580" width="1" height="14" fill="#0000FF"/>
<rect x="578" y="626" width="1" height="23" fill="#0000FF"/>
<path shape-rendering="auto" d="M569 648.5 H588 L578.5 658.3 Z" stroke="#0000FF" fill="none"/>
<circle shape-rendering="auto" cx="578.5" cy="610" r="16.5" stroke="#000080" fill="none"/>
<rect x="573" y="600" width="11" height="1" fill="#000080"/>
<rect x="578" y="595" width="1" height="10" fill="#000080"/>
<rect x="573" y="620" width="11" height="1" fill="#000080"/>
<rect x="628" y="580" width="1" height="27" fill="#0000FF"/>
<rect x="620" y="620" width="18" height="1" fill="#000080"/>
<rect x="620" y="624" width="18" height="1" fill="#000080"/>
<rect x="628" y="606" width="1" height="15" fill="#000080"/>
<rect x="628" y="624" width="1" height="15" fill="#000080"/>
<rect x="628" y="638" width="1" height="70" fill="#0000FF"/>
<rect x="628" y="673" width="16" height="1" fill="#0000FF"/>
<rect x="646" y="673" width="57" height="1" fill="#0000FF"/>
<rect x="628" y="707" width="44" height="1" fill="#0000FF"/>
<rect x="671" y="580" width="1" height="10" fill="#0000FF"/>
<path shape-rendering="auto" d="M671.5 593 L679.9 597.2 L663.1 605.7 L679.9 614.1 L663.1 622.6 L671.5 626.8" stroke="#000080" stroke-width="1" fill="none"/>
<rect x="671" y="589" width="1" height="5" fill="#000080"/>
<rect x="671" y="627" width="1" height="5" fill="#000080"/>
<rect x="671" y="631" width="1" height="19" fill="#0000FF"/>
<rect x="671" y="698" width="1" height="112" fill="#0000FF"/>
<rect x="730" y="580" width="1" height="10" fill="#0000FF"/>
<path shape-rendering="auto" d="M730.5 593 L738.9 597.2 L722.1 605.7 L738.9 614.1 L722.1 622.6 L730.5 626.8" stroke="#000080" stroke-width="1" fill="none"/>
<rect x="730" y="589" width="1" height="5" fill="#000080"/>
<rect x="730" y="627" width="1" height="5" fill="#000080"/>
<rect x="730" y="631" width="1" height="19" fill="#0000FF"/>
<rect x="730" y="639" width="37" height="1" fill="#0000FF"/>
<rect x="730" y="698" width="1" height="112" fill="#0000FF"/>
<path shape-rendering="auto" d="M766.5 632 V648 L779.5 639.5 Z" stroke="#000080" fill="none"/>
<rect x="779" y="631" width="1" height="18" fill="#000080"/>
<rect x="779" y="639" width="36" height="1" fill="#0000FF"/>
<rect x="814" y="639" width="1" height="18" fill="#0000FF"/>
<path shape-rendering="auto" d="M814.5 660 L822.9 664.2 L806.1 672.7 L822.9 681.1 L806.1 689.6 L814.5 693.8" stroke="#000080" stroke-width="1" fill="none"/>
<rect x="814" y="656" width="1" height="5" fill="#000080"/>
<rect x="814" y="694" width="1" height="5" fill="#000080"/>
<rect x="814" y="698" width="1" height="120" fill="#0000FF"/>
<path shape-rendering="auto" d="M814.5 821 L822.9 825.2 L806.1 833.7 L822.9 842.1 L806.1 850.6 L814.5 854.8" stroke="#000080" stroke-width="1" fill="none"/>
<rect x="814" y="817" width="1" height="5" fill="#000080"/>
<rect x="814" y="855" width="1" height="5" fill="#000080"/>
<rect x="814" y="859" width="1" height="27" fill="#0000FF"/>
<rect x="779" y="885" width="36" height="1" fill="#0000FF"/>
<path shape-rendering="auto" d="M779.5 877 V893 L766.5 885.5 Z" stroke="#000080" fill="none"/>
<rect x="766" y="876" width="1" height="18" fill="#000080"/>
<rect x="730" y="885" width="37" height="1" fill="#0000FF"/>
<rect x="696" y="741" width="60" height="1" fill="#0000FF"/>
<path shape-rendering="auto" d="M755.5 732.5 V749.5 L775.8 741.5 Z" stroke="#000080" fill="none"/>
<circle shape-rendering="auto" cx="780.5" cy="741.5" r="3.6" stroke="#000080" fill="none"/>
<path shape-rendering="auto" d="M757.5 743.5 H762.5 V739.5 H765 M759.5 743.5 V739.5 H762.5" stroke="#000080" fill="none"/>
<rect x="784" y="741" width="57" height="1" fill="#0000FF"/>
<rect x="696" y="741" width="1" height="10" fill="#0000FF"/>
<rect x="688" y="764" width="18" height="1" fill="#000080"/>
<rect x="688" y="768" width="18" height="1" fill="#000080"/>
<rect x="696" y="750" width="1" height="15" fill="#000080"/>
<rect x="696" y="768" width="1" height="15" fill="#000080"/>
<rect x="696" y="782" width="1" height="11" fill="#0000FF"/>
<path shape-rendering="auto" d="M687 792.5 H706 L696.5 802.3 Z" stroke="#0000FF" fill="none"/>
<rect x="730" y="783" width="111" height="1" fill="#0000FF"/>
<path shape-rendering="auto" d="M840.5 734.5 H864 L871.5 741.5 L864 748.5 H840.5 Z" stroke="#0000FF" fill="none"/>
<path shape-rendering="auto" d="M840.5 776.5 H855 L862.5 783.5 L855 790.5 H840.5 Z" stroke="#0000FF" fill="none"/>
<rect x="643.5" y="660.5" width="2" height="26" stroke="#000080" fill="none"/>
<path shape-rendering="auto" d="M646.3 664.5 L656.4 654.3 L660.8 658.5 Z" stroke="#000080" fill="none"/>
<path shape-rendering="auto" d="M658.5999999999999 656.4 L671.4 648.5" stroke="#000080" stroke-width="1" fill="none"/>
<path shape-rendering="auto" d="M646.2 682.8 L671.4 698" stroke="#000080" stroke-width="1" fill="none"/>
<rect x="702.5" y="660.5" width="2" height="26" stroke="#000080" fill="none"/>
<path shape-rendering="auto" d="M705.3 664.5 L715.4 654.3 L719.8 658.5 Z" stroke="#000080" fill="none"/>
<path shape-rendering="auto" d="M717.5999999999999 656.4 L730.4 648.5" stroke="#000080" stroke-width="1" fill="none"/>
<path shape-rendering="auto" d="M705.2 682.8 L730.4 698" stroke="#000080" stroke-width="1" fill="none"/>
<rect x="643.5" y="821.5" width="2" height="26" stroke="#000080" fill="none"/>
<path shape-rendering="auto" d="M671.4 859.5 L656.4 853.7 L660.6 849.5 Z" stroke="#000080" fill="none"/>
<path shape-rendering="auto" d="M646.2 843.2 L658.5 851.6" stroke="#000080" stroke-width="1" fill="none"/>
<path shape-rendering="auto" d="M646.2 824.5 L671.4 808.8" stroke="#000080" stroke-width="1" fill="none"/>
<rect x="702.5" y="821.5" width="2" height="26" stroke="#000080" fill="none"/>
<path shape-rendering="auto" d="M730.4 859.5 L715.4 853.7 L719.6 849.5 Z" stroke="#000080" fill="none"/>
<path shape-rendering="auto" d="M705.2 843.2 L717.5 851.6" stroke="#000080" stroke-width="1" fill="none"/>
<path shape-rendering="auto" d="M705.2 824.5 L730.4 808.8" stroke="#000080" stroke-width="1" fill="none"/>
<rect x="620" y="834" width="24" height="1" fill="#0000FF"/>
<rect x="646" y="834" width="57" height="1" fill="#0000FF"/>
<rect x="671" y="860" width="1" height="34" fill="#0000FF"/>
<path shape-rendering="auto" d="M671.5 897 L679.9 901.2 L663.1 909.7 L679.9 918.1 L663.1 926.6 L671.5 930.8" stroke="#000080" stroke-width="1" fill="none"/>
<rect x="671" y="893" width="1" height="5" fill="#000080"/>
<rect x="671" y="931" width="1" height="5" fill="#000080"/>
<rect x="671" y="935" width="1" height="10" fill="#0000FF"/>
<rect x="730" y="860" width="1" height="34" fill="#0000FF"/>
<path shape-rendering="auto" d="M730.5 897 L738.9 901.2 L722.1 909.7 L738.9 918.1 L722.1 926.6 L730.5 930.8" stroke="#000080" stroke-width="1" fill="none"/>
<rect x="730" y="893" width="1" height="5" fill="#000080"/>
<rect x="730" y="931" width="1" height="5" fill="#000080"/>
<rect x="730" y="935" width="1" height="18" fill="#0000FF"/>
<path shape-rendering="auto" d="M721 952.5 H740 L730.5 962.3 Z" stroke="#0000FF" fill="none"/>
<rect x="408" y="944" width="323" height="1" fill="#0000FF"/>
<rect x="442" y="885" width="230" height="1" fill="#0000FF"/>
<rect x="620" y="834" width="1" height="61" fill="#0000FF"/>
<rect x="611" y="908" width="19" height="1" fill="#000080"/>
<rect x="611" y="912" width="19" height="1" fill="#000080"/>
<rect x="620" y="894" width="1" height="15" fill="#000080"/>
<rect x="620" y="912" width="1" height="15" fill="#000080"/>
<rect x="620" y="926" width="1" height="19" fill="#0000FF"/>
<rect x="493" y="834" width="69" height="1" fill="#0000FF"/>
<path shape-rendering="auto" d="M565 834.5 L569.2 826.1 L577.7 842.9 L586.1 826.1 L594.6 842.9 L598.8 834.5" stroke="#000080" stroke-width="1" fill="none"/>
<rect x="561" y="834" width="5" height="1" fill="#000080"/>
<rect x="599" y="834" width="5" height="1" fill="#000080"/>
<rect x="603" y="834" width="18" height="1" fill="#0000FF"/>
<path shape-rendering="auto" d="M459.5 817.5 V851.5 L492.8 834.5 Z" stroke="#000080" fill="none"/>
<rect x="442" y="825" width="18" height="1" fill="#0000FF"/>
<rect x="442" y="825" width="1" height="61" fill="#0000FF"/>
<rect x="408" y="842" width="52" height="1" fill="#0000FF"/>
<rect x="408" y="842" width="1" height="31" fill="#0000FF"/>
<circle shape-rendering="auto" cx="408.5" cy="889" r="16.5" stroke="#000080" fill="none"/>
<rect x="403" y="879" width="11" height="1" fill="#000080"/>
<rect x="408" y="874" width="1" height="10" fill="#000080"/>
<rect x="403" y="899" width="11" height="1" fill="#000080"/>
<rect x="408" y="906" width="1" height="39" fill="#0000FF"/>
<rect x="476" y="800" width="1" height="26" fill="#000080"/>
<rect x="476" y="843" width="1" height="26" fill="#0000FF"/>
<path shape-rendering="auto" d="M467 868.5 H486 L476.5 878.3 Z" stroke="#0000FF" fill="none"/>
<rect x="462" y="825" width="6" height="1" fill="#000080"/>
<rect x="462" y="842" width="6" height="1" fill="#000080"/>
<rect x="464" y="839" width="1" height="7" fill="#000080"/>
<rect x="478" y="823" width="6" height="1" fill="#000080"/>
<rect x="480" y="821" width="1" height="6" fill="#000080"/>
<rect x="478" y="845" width="6" height="1" fill="#000080"/>
<rect x="626" y="578" width="5" height="5" fill="#0000FF"/>
<rect x="669" y="578" width="5" height="5" fill="#0000FF"/>
<rect x="728" y="578" width="5" height="5" fill="#0000FF"/>
<rect x="728" y="637" width="5" height="5" fill="#0000FF"/>
<rect x="626" y="671" width="5" height="5" fill="#0000FF"/>
<rect x="635" y="671" width="5" height="5" fill="#0000FF"/>
<rect x="669" y="705" width="5" height="5" fill="#0000FF"/>
<rect x="728" y="739" width="5" height="5" fill="#0000FF"/>
<rect x="812" y="739" width="5" height="5" fill="#0000FF"/>
<rect x="728" y="781" width="5" height="5" fill="#0000FF"/>
<rect x="618" y="832" width="5" height="5" fill="#0000FF"/>
<rect x="635" y="832" width="5" height="5" fill="#0000FF"/>
<rect x="669" y="883" width="5" height="5" fill="#0000FF"/>
<rect x="728" y="883" width="5" height="5" fill="#0000FF"/>
<rect x="618" y="942" width="5" height="5" fill="#0000FF"/>
<rect x="669" y="942" width="5" height="5" fill="#0000FF"/>
<rect x="728" y="942" width="5" height="5" fill="#0000FF"/>
<text x="590" y="592" font-size="10.8" text-anchor="start" >V1</text>
<text x="590" y="639" font-size="10.8" text-anchor="start" >6</text>
<text x="633" y="614" font-size="10.8" text-anchor="start" >C4</text>
<text x="633" y="643" font-size="10.8" text-anchor="start" >10n</text>
<text x="680" y="605" font-size="10.8" text-anchor="start" >R2</text>
<text x="680" y="624" font-size="10.8" text-anchor="start" >100</text>
<text x="739" y="605" font-size="10.8" text-anchor="start" >R1</text>
<text x="739" y="624" font-size="10.8" text-anchor="start" >100</text>
<text x="773" y="585" font-size="10.8" text-anchor="start" >VCC</text>
<text x="765" y="628" font-size="10.8" text-anchor="start" >D4</text>
<text x="768" y="659" font-size="10.8" text-anchor="start" >D</text>
<text x="660" y="668" font-size="10.8" text-anchor="start" >2N3906</text>
<text x="680" y="685.5" font-size="10.8" text-anchor="start" >Q4</text>
<text x="721" y="667" font-size="10.8" text-anchor="start" >2N3906</text>
<text x="739" y="685.5" font-size="10.8" text-anchor="start" >Q3</text>
<text x="825" y="673" font-size="10.8" text-anchor="start" >R5</text>
<text x="825" y="692" font-size="10.8" text-anchor="start" >330</text>
<text x="509.5" y="707.5" font-size="11.3" text-anchor="start" >.inc 74hc.lib</text>
<text x="509.5" y="723.5" font-size="11.3" text-anchor="start" >.ic V(tri)=2.2</text>
<text x="509.5" y="736" font-size="11.3" text-anchor="start" >.tran 0 10µ 0 0.1n</text>
<text x="509.5" y="748.5" font-size="11.3" text-anchor="start" letter-spacing="0.15">.options plotwinsize=0</text>
<text x="755" y="728" font-size="10.8" text-anchor="start" >U2</text>
<text x="747" y="762" font-size="10.8" text-anchor="start" >74HC14</text>
<text x="699" y="757" font-size="10.8" text-anchor="start" >C1</text>
<text x="699" y="788" font-size="10.8" text-anchor="start" >270p</text>
<text x="841" y="745.5" font-size="10.8" text-anchor="start" >sqr</text>
<text x="841" y="787.5" font-size="10.8" text-anchor="start" >tri</text>
<text x="666" y="829" font-size="10.8" text-anchor="start" >Q2</text>
<text x="657" y="845" font-size="10.8" text-anchor="start" >2N3904</text>
<text x="726" y="829" font-size="10.8" text-anchor="start" >Q1</text>
<text x="722" y="843" font-size="10.8" text-anchor="start" >2N3904</text>
<text x="825" y="834" font-size="10.8" text-anchor="start" >R6</text>
<text x="825" y="852.5" font-size="10.8" text-anchor="start" >330</text>
<text x="765" y="872.5" font-size="10.8" text-anchor="start" >D2</text>
<text x="768" y="904" font-size="10.8" text-anchor="start" >D</text>
<text x="740" y="910" font-size="10.8" text-anchor="start" >R3</text>
<text x="740" y="929" font-size="10.8" text-anchor="start" >100</text>
<text x="681" y="910" font-size="10.8" text-anchor="start" >R4</text>
<text x="681" y="929" font-size="10.8" text-anchor="start" >100</text>
<text x="624" y="901" font-size="10.8" text-anchor="start" >C2</text>
<text x="624" y="930.5" font-size="10.8" text-anchor="start" >10n</text>
<text x="575" y="822" font-size="10.8" text-anchor="start" >R9</text>
<text x="573" y="853" font-size="10.8" text-anchor="start" >100</text>
<text x="485" y="821" font-size="10.8" text-anchor="start" >U1</text>
<text x="485" y="851" font-size="10.8" text-anchor="start" >LM324_NS</text>
<text x="421" y="872" font-size="10.8" text-anchor="start" >V2</text>
<text x="421" y="918" font-size="10.8" text-anchor="start" >0.1</text>
<text x="480.5" y="798.5" font-size="12.6" font-weight="normal" style="stroke-width:0.55px" transform="rotate(-90 480.5 798.5)">VCC</text>
</svg>

<!-- ============ CURSOR DIALOG ============ -->
<div class="a" style="left:877px;top:539px;width:269px;height:196px;box-sizing:border-box;background:#D4D0C8;border-top:1px solid #D4D0C8;border-left:1px solid #D4D0C8;border-right:1px solid #404040;border-bottom:1px solid #404040;box-shadow:inset 1px 1px #fff,inset -1px -1px #808080;"></div>
<div class="a tbi" style="left:880px;top:542px;width:262px;height:17px;"></div>
<div class="a ttl" style="left:882px;top:544px;color:#D4D0C8;letter-spacing:-0.5px">CmosVCO_hc14.raw</div>
<div class="btn" style="left:1125px;top:544px;"></div>
<svg class="a" style="left:1125px;top:544px" width="16" height="14"><path d="M4 3 L11 10 M11 3 L4 10" stroke="#000" stroke-width="1.6"/></svg>

<div class="grp" style="left:881px;top:567px;width:260px;height:47px;"></div>
<div class="a lbl" style="left:887px;top:562px;background:#D4D0C8;padding:0 2px;">Cursor 1</div>
<div class="a lbl" style="left:997px;top:573px">V(sqr)</div>
<div class="a lbl" style="left:884px;top:594px">Horz:</div>
<div class="edit" style="left:912px;top:590px;width:91px">5.29703µs</div>
<div class="a lbl" style="left:1019px;top:594px">Vert:</div>
<div class="edit" style="left:1046px;top:590px;width:92px">486.678mV</div>

<div class="grp" style="left:881px;top:622px;width:260px;height:46px;"></div>
<div class="a lbl" style="left:887px;top:616px;background:#D4D0C8;padding:0 2px;">Cursor 2</div>
<div class="a lbl" style="left:997px;top:629px">V(sqr)</div>
<div class="a lbl" style="left:884px;top:650px">Horz:</div>
<div class="edit" style="left:912px;top:646px;width:91px">6.07261µs</div>
<div class="a lbl" style="left:1019px;top:650px">Vert:</div>
<div class="edit" style="left:1046px;top:646px;width:92px">2.18741V</div>

<div class="grp" style="left:881px;top:676px;width:260px;height:54px;"></div>
<div class="a lbl" style="left:887px;top:671px;background:#D4D0C8;padding:0 2px;">Diff (Cursor2 - Cursor1)</div>
<div class="a lbl" style="left:884px;top:689px">Horz:</div>
<div class="edit" style="left:912px;top:685px;width:91px">775.578ns</div>
<div class="a lbl" style="left:1019px;top:689px">Vert:</div>
<div class="edit" style="left:1046px;top:685px;width:92px">1.70073V</div>
<div class="a lbl" style="left:885px;top:711px">Freq:</div>
<div class="edit" style="left:912px;top:707px;width:91px">1.28936MHz</div>
<div class="a lbl" style="left:1011px;top:711px">Slope:</div>
<div class="edit" style="left:1046px;top:707px;width:92px">2.19286e+006</div>

<!-- status bar -->
<div class="hl" style="left:0;top:995px;width:1280px;background:#fff"></div>
<div class="a" style="left:2px;top:980px;font-size:11px;letter-spacing:-0.2px;white-space:nowrap">Click to manually enter Horizontal Axis Limits</div>
<div class="a" style="left:1229px;top:978px;width:51px;height:17px;box-sizing:border-box;border-top:1px solid #808080;border-left:1px solid #808080;"></div>
<div class="a" style="left:1231px;top:980px;font-size:11px;white-space:nowrap">Alternate</div>
</body></html>
